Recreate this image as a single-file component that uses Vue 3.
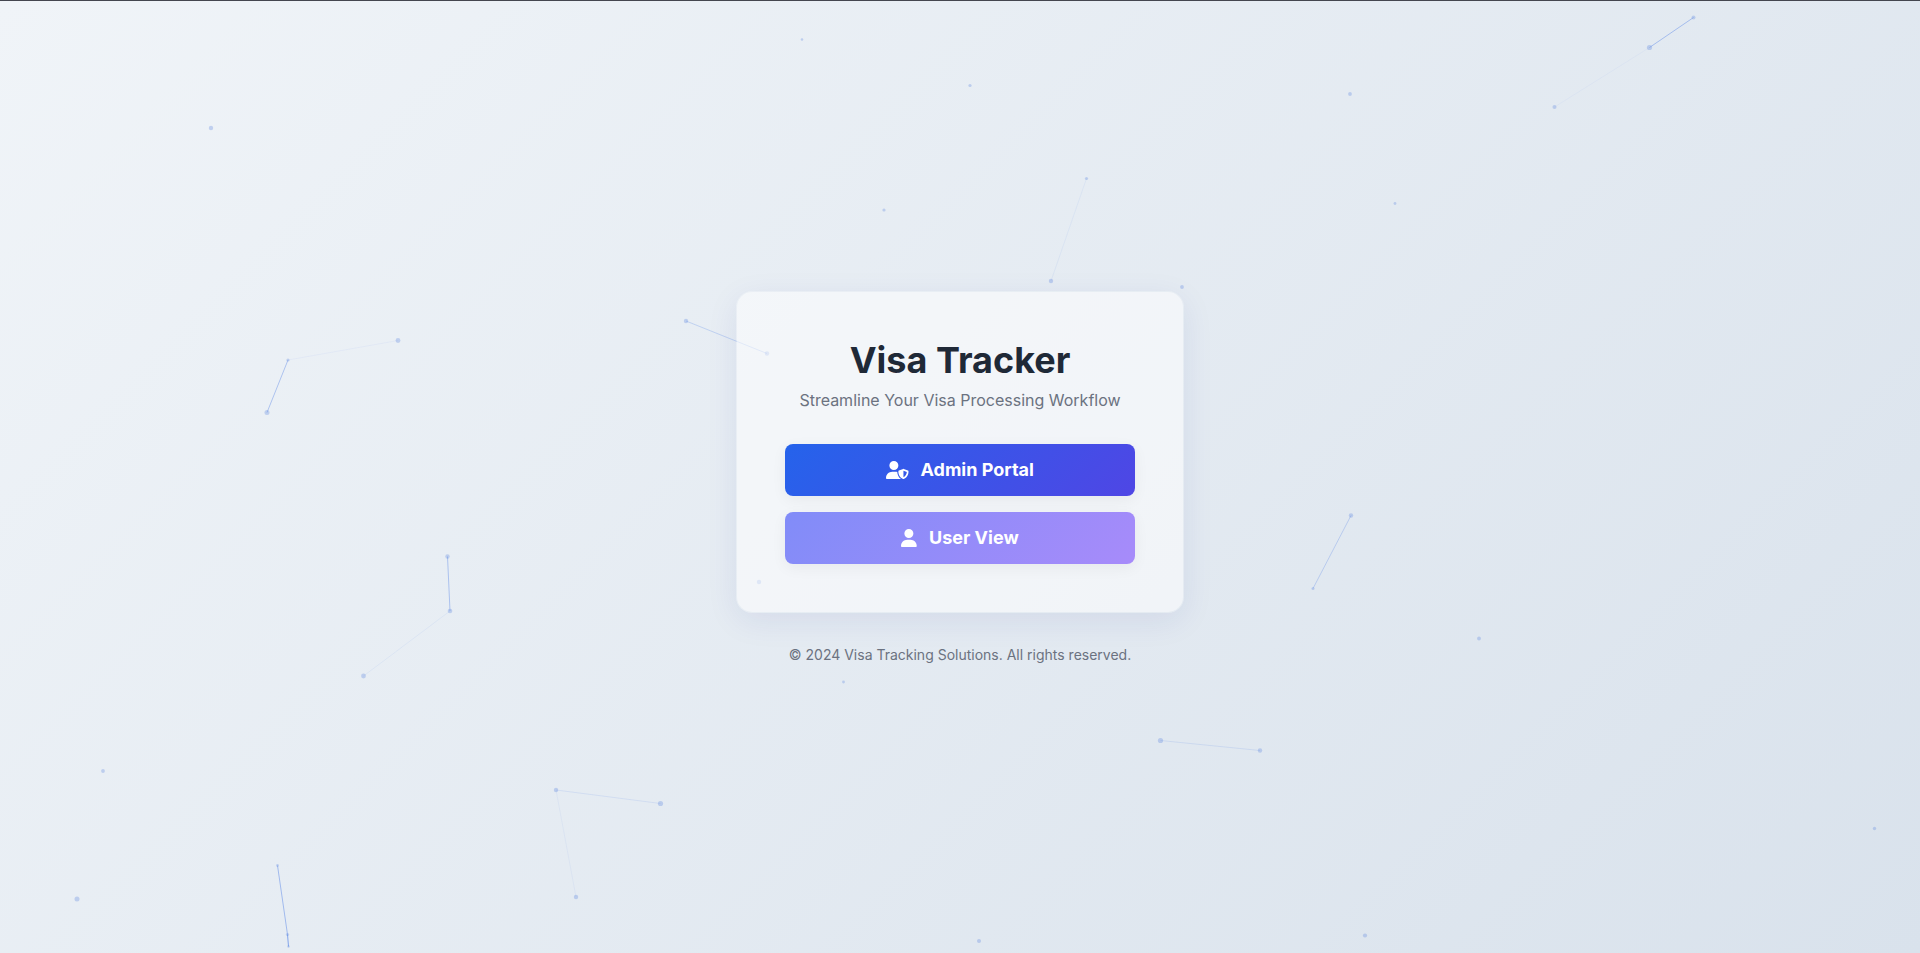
<script setup>
const nodes = [
  [211, 128, 2.2], [802, 39.5, 1.3], [970, 85.500, 1.6], [1350, 94, 1.9], [1086.5, 178.5, 1.6],
  [1395, 203.5, 1.4], [884, 210, 1.6], [1051, 281, 2.2], [1182, 287, 1.9], [686, 321, 2.2],
  [767, 353.5, 2.2], [759, 582, 2.2], [1693.5, 17.5, 2], [1649.5, 47.5, 2.6], [1554.5, 107, 2],
  [398, 340.5, 2.4], [288, 360, 1.6], [267, 412.5, 2.5], [447.5, 556.5, 2.2], [450, 611, 2.3],
  [363.5, 676, 2.4], [103, 771, 1.9], [77, 899, 2.5], [277.5, 865.5, 1.4], [287.5, 934.5, 1.6],
  [288.5, 946.5, 1.2], [556, 790, 2.2], [660.5, 803.5, 2.6], [576, 897, 2.2], [1351, 515.5, 2.2],
  [1313, 588.5, 1.5], [1479, 638.5, 1.9], [1160.5, 740.5, 2.6], [1260, 750.5, 2.2],
  [1874.5, 828.5, 1.7], [1365, 935.5, 2.1], [843.5, 682, 1.4], [979, 941, 2],
]

const links = [
  [12, 13, 0.42], [13, 14, 0.05], [4, 7, 0.08], [9, 10, 0.26], [15, 16, 0.06],
  [16, 17, 0.4], [18, 19, 0.4], [19, 20, 0.08], [23, 24, 0.46], [24, 25, 0.66],
  [26, 27, 0.13], [26, 28, 0.07], [29, 30, 0.28], [32, 33, 0.15],
]
</script>

<template>
  <div class="page">
    <svg class="network" viewBox="0 0 1920 953" preserveAspectRatio="xMidYMid slice" aria-hidden="true">
      <line
        v-for="([a, b, strength], i) in links"
        :key="'l' + i"
        :x1="nodes[a][0]" :y1="nodes[a][1]" :x2="nodes[b][0]" :y2="nodes[b][1]"
        :stroke-opacity="strength"
      />
      <circle v-for="([x, y, r], i) in nodes" :key="'n' + i" :cx="x" :cy="y" :r="r" />
    </svg>

    <main class="card">
      <h1 class="title">Visa Tracker</h1>
      <p class="subtitle">Streamline Your Visa Processing Workflow</p>
      <div class="actions">
        <button type="button" class="btn admin">
          <svg class="icon" viewBox="0 0 640 512" aria-hidden="true">
            <path d="M224 256A128 128 0 1 0 224 0a128 128 0 1 0 0 256zm-45.700 48C79.800 304 0 383.800 0 482.300C0 498.700 13.300 512 29.700 512l388.600 0c1.800 0 3.500-.2 5.300-.5c-76.300-55.100-99.800-141-103.100-200.200c-16.100-4.800-33.100-7.300-50.700-7.300l-91.500 0zm308.800-78.300l-120 48C358 277.400 352 286.200 352 296c0 63.300 25.900 168.800 134.800 214.200c5.900 2.500 12.600 2.500 18.500 0C614.100 464.800 640 359.300 640 296c0-9.800-6-18.600-15.100-22.300l-120-48c-5.700-2.300-12.100-2.300-17.800 0zM591.400 312c-3.900 50.700-27.200 116.700-95.400 149.700l0-187.800L591.400 312z" />
          </svg>
          <span>Admin Portal</span>
        </button>
        <button type="button" class="btn user">
          <svg class="icon" viewBox="0 0 448 512" aria-hidden="true">
            <path d="M224 256A128 128 0 1 0 224 0a128 128 0 1 0 0 256zm-45.700 48C79.800 304 0 383.800 0 482.300C0 498.700 13.300 512 29.700 512l388.600 0c16.400 0 29.700-13.300 29.700-29.700C448 383.800 368.200 304 269.700 304l-91.400 0z" />
          </svg>
          <span>User View</span>
        </button>
      </div>
    </main>

    <footer class="footer">© 2024 Visa Tracking Solutions. All rights reserved.</footer>
  </div>
</template>

<style>
body {
  margin: 0;
}
</style>

<style scoped>
.page {
  position: relative;
  box-sizing: border-box;
  min-height: 100vh;
  padding-top: 2px;
  display: flex;
  flex-direction: column;
  align-items: center;
  justify-content: center;
  border-top: 1px solid #44464f;
  background: linear-gradient(135deg, #f0f4f8, #d9e2ec);
  font-family: Inter, "Liberation Sans", sans-serif;
  overflow: hidden;
}

.network {
  position: absolute;
  inset: -1px 0 0;
  width: 100%;
  height: 100vh;
}

.network circle {
  fill: #658de2;
  fill-opacity: 0.33;
}

.network line {
  stroke: #4f7fe6;
  stroke-width: 1;
}

.card {
  position: relative;
  box-sizing: border-box;
  width: 100%;
  max-width: 448px;
  padding: 48px;
  border: 1px solid rgba(255, 255, 255, 0.1);
  border-radius: 16px;
  background: rgba(255, 255, 255, 0.52);
  background-clip: padding-box;
  box-shadow: 0 8px 32px rgba(31, 38, 135, 0.08);
  text-align: center;
}

.title {
  margin: 0 0 8px;
  font-size: 36px;
  line-height: 40px;
  font-weight: 700;
  color: #1f2937;
}

.subtitle {
  margin: 0 0 32px;
  font-size: 16px;
  line-height: 24px;
  color: #6b7280;
}

.actions {
  display: flex;
  flex-direction: column;
  gap: 16px;
}

.btn {
  display: flex;
  align-items: center;
  justify-content: center;
  gap: 12px;
  padding: 12px 24px;
  border: 0;
  border-radius: 8px;
  color: #fff;
  font-family: inherit;
  font-size: 18px;
  line-height: 28px;
  font-weight: 700;
  box-shadow: 0 4px 15px rgba(0, 0, 0, 0.05);
  cursor: pointer;
}

.admin {
  background: linear-gradient(135deg, #2563eb, #4f46e5);
}

.user {
  background: linear-gradient(135deg, #818cf8, #a78bfa);
}

.icon {
  height: 18px;
  fill: currentColor;
}

.footer {
  position: relative;
  margin-top: 32px;
  font-size: 14px;
  line-height: 20px;
  color: #6b7280;
}
</style>
